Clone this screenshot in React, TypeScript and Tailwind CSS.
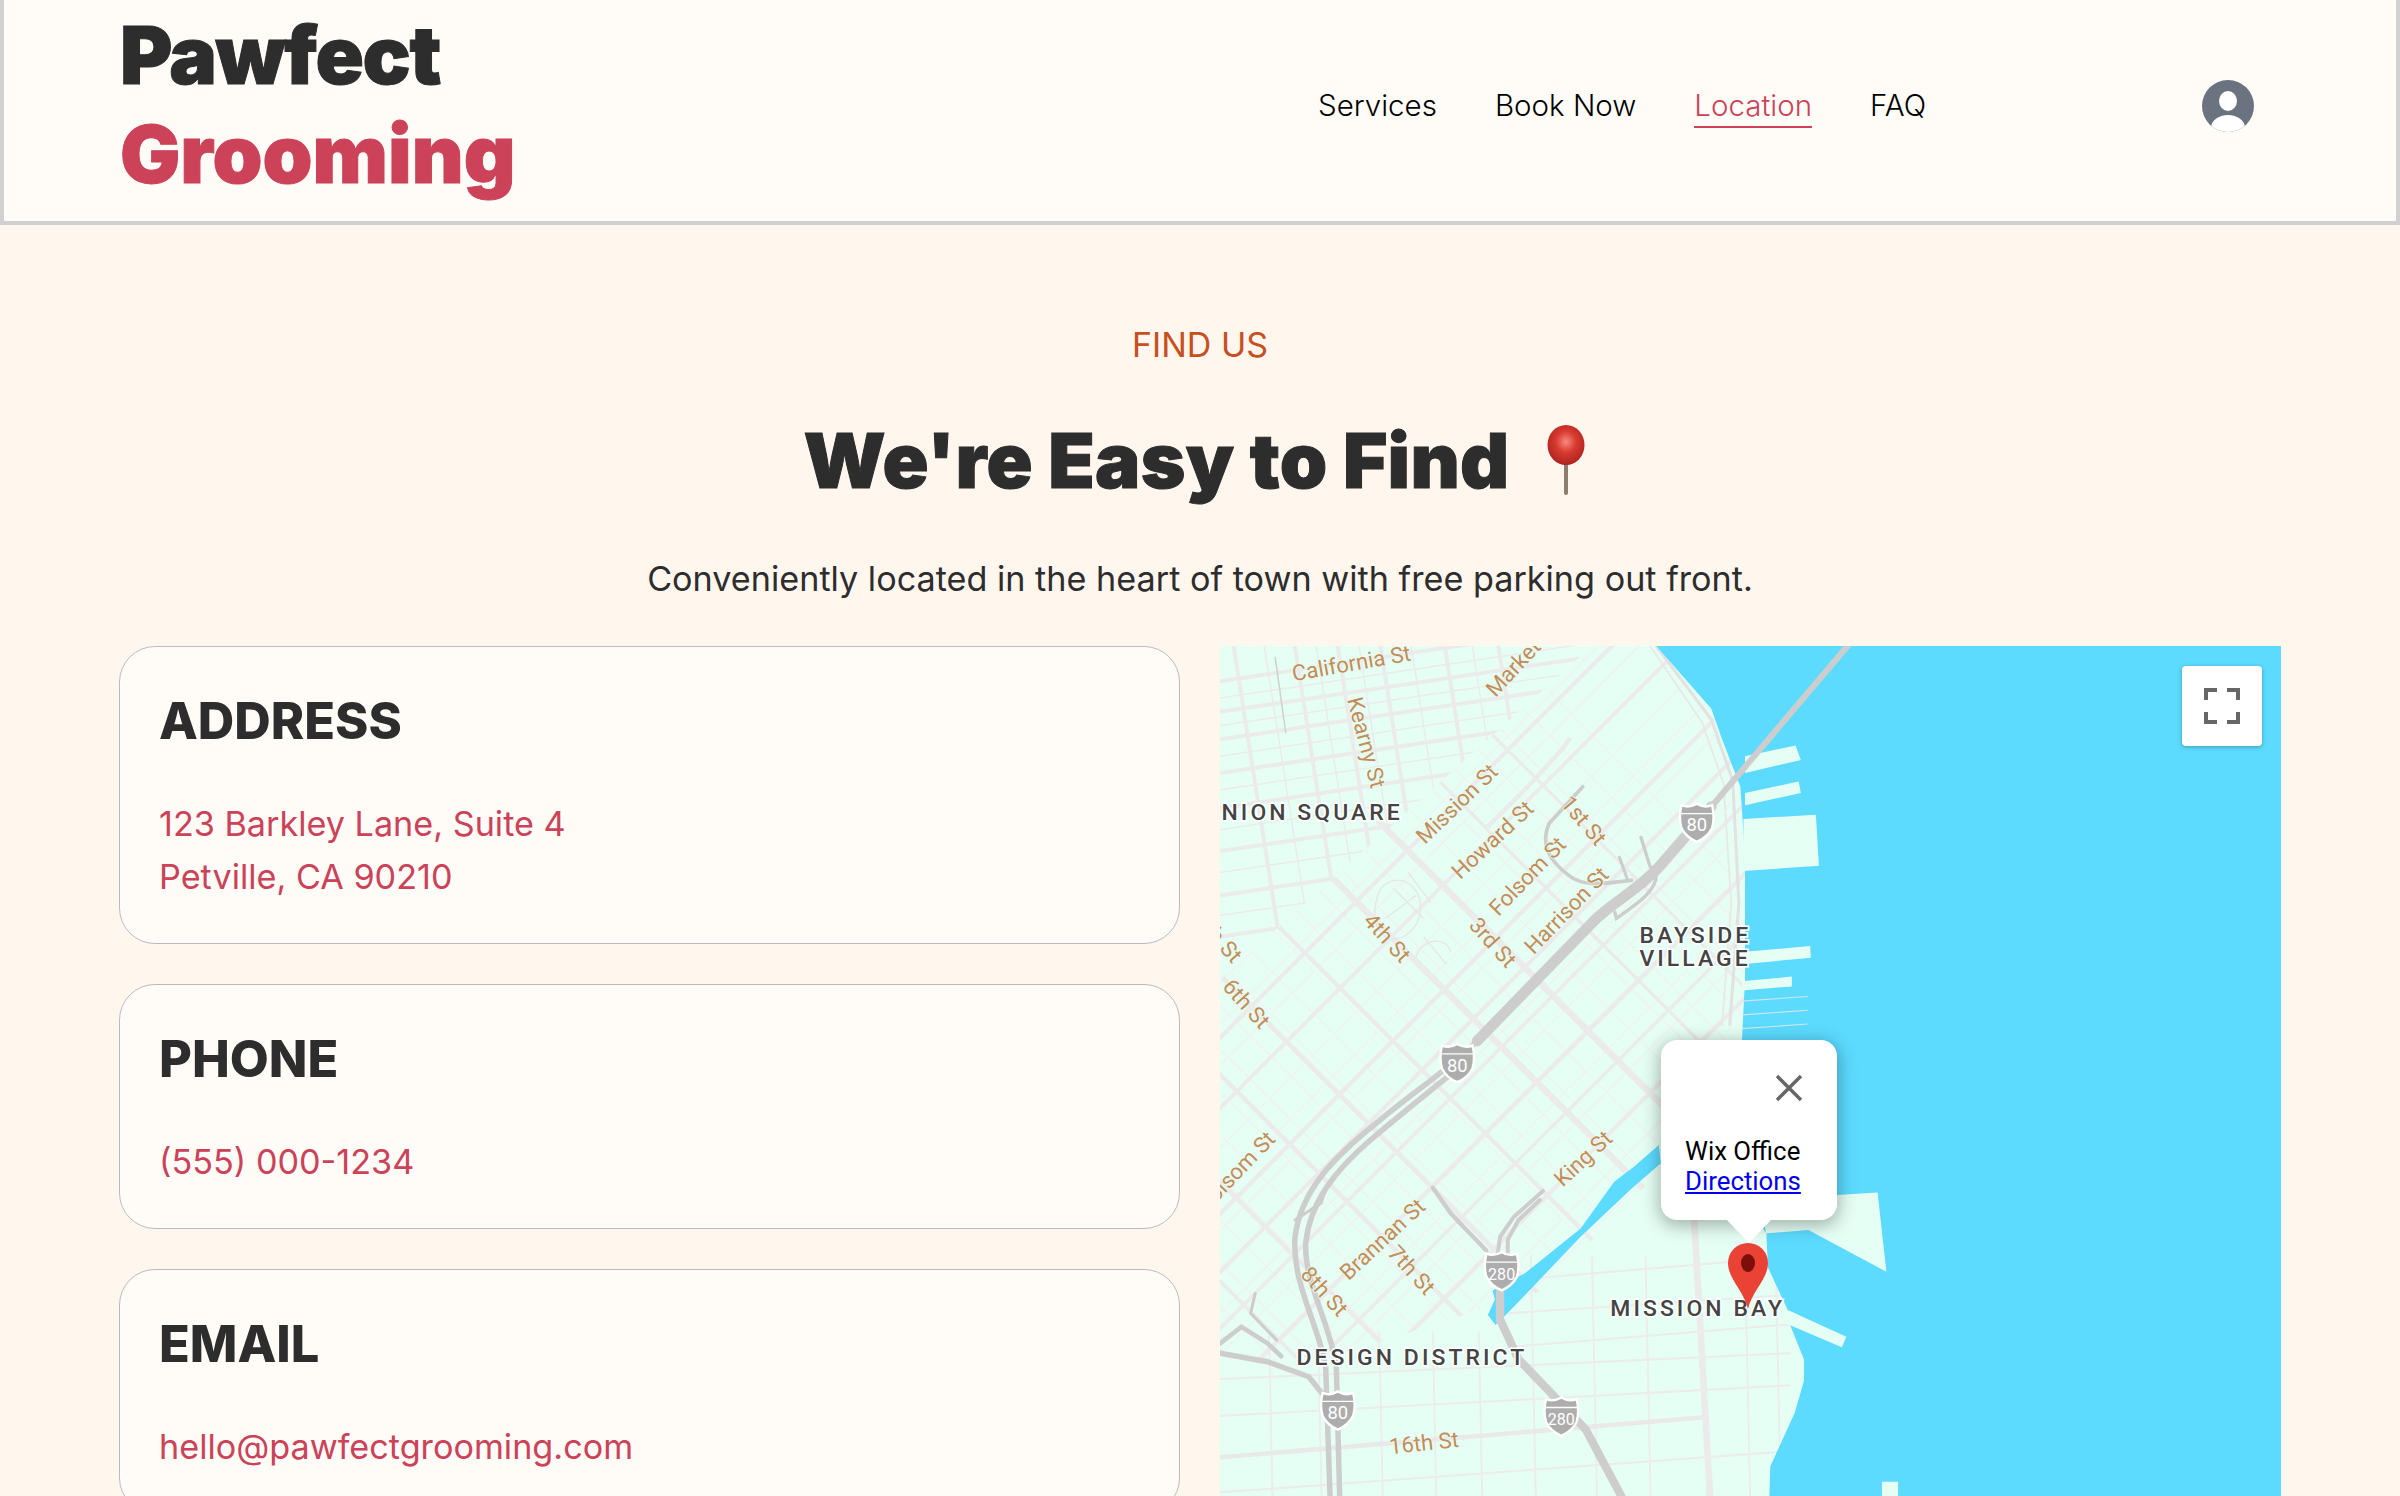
// map geometry is written in the coordinates of the 1568px wide preview
const pt = (c: number, d: number) => `${(c - d) / 2},${(c + d) / 2}`
const diag = (c0: number, d0: number, c1: number, d1: number) => `M${pt(c0, d0)} L${pt(c1, d1)}`

// streets running up-right: x + y = c
const upRightMajor: [number, number][] = [
  [1425, 3.8], [1475, 2.8], [1521, 2.6], [1590, 2.8], [1628, 2.8], [1665, 2.4], [1711, 2.8], [1750, 2.4], [1792, 2.6],
]
const upRightMinor = Array.from({ length: 18 }, (_, i) => 1385 + i * 27)

// streets running down-right: y - x = d
const downRightMajor: [number, number][] = [
  [-495, 2.2], [-430, 2.4], [-297, 4.2], [-230, 2.8], [-160, 3.2], [-95, 3], [-25, 3], [40, 2.6], [105, 2.4], [170, 2.2],
]
const downRightMinor = Array.from({ length: 28 }, (_, i) => -560 + i * 28)

const blockH = [445, 456, 465, 474, 483, 494, 505, 516, 528, 542, 556, 570, 585, 598, 612]
const blockV = [812, 832, 852, 866, 880, 894, 908, 928, 950, 968, 985]
const lowerH = [[797, 901, 1170, 884], [797, 925, 1170, 905], [797, 975, 1170, 948], [990, 836, 1160, 822], [985, 858, 1168, 846], [985, 880, 1172, 865]]
const lowerV = [828, 860, 900, 935, 965, 1000, 1040, 1075, 1140, 1160]

const streetLabels: { t: string; x: number; y: number; r: number; end?: boolean }[] = [
  { t: 'California St', x: 845, y: 445, r: -10 },
  { t: 'Market St', x: 977, y: 456, r: -47 },
  { t: 'Kearny St', x: 880, y: 457, r: 75 },
  { t: 'Mission St', x: 931, y: 552, r: -44 },
  { t: 'Howard St', x: 954, y: 575, r: -43 },
  { t: '1st St', x: 1019, y: 525, r: 50 },
  { t: 'Folsom St', x: 979, y: 599, r: -46 },
  { t: 'Harrison St', x: 1002, y: 624, r: -46 },
  { t: '4th St', x: 890, y: 602, r: 48 },
  { t: '3rd St', x: 959, y: 605, r: 48 },
  { t: '5th St', x: 805, y: 630, r: 48, end: true },
  { t: '6th St', x: 798, y: 645, r: 48 },
  { t: 'Folsom St', x: 834, y: 745, r: -46, end: true },
  { t: 'King St', x: 1021, y: 776, r: -43 },
  { t: 'Brannan St', x: 881, y: 837, r: -43 },
  { t: '7th St', x: 906, y: 819, r: 48 },
  { t: '8th St', x: 849, y: 833, r: 48 },
  { t: '16th St', x: 908, y: 950, r: -6 },
]

const areaLabels = [
  { t: 'NION SQUARE', x: 798, y: 536 },
  { t: 'BAYSIDE', x: 1071, y: 616 },
  { t: 'VILLAGE', x: 1071, y: 631 },
  { t: 'MISSION BAY', x: 1052, y: 860 },
  { t: 'DESIGN DISTRICT', x: 847, y: 892 },
]

function Shield({ x, y, label }: { x: number; y: number; label: string }) {
  return (
    <g transform={`translate(${x} ${y})`}>
      <path
        d="M-10 -11 Q-5 -9 0 -12 Q5 -9 10 -11 Q12 -3 10 4 Q7 10 0 13 Q-7 10 -10 4 Q-12 -3 -10 -11Z"
        fill="#adadad"
        stroke="#fff"
        strokeWidth="1.6"
      />
      <path d="M-10.5 -5.5 H10.5" stroke="#fff" strokeWidth="0.9" />
      <text x="0" y="6" textAnchor="middle" fontFamily="Roboto, sans-serif" fontSize={label.length > 2 ? 10.5 : 12} fill="#fff">
        {label}
      </text>
    </g>
  )
}

function MapArt() {
  return (
    <svg viewBox="797 422 693.2 588" className="block h-[900px] w-[1061px]" preserveAspectRatio="none">
      <defs>
        <clipPath id="downtown">
          <polygon points="797,422 1040,422 797,640" />
        </clipPath>
        <clipPath id="lower">
          <polygon points="797,870 985,870 985,820 1180,800 1180,1010 797,1010" />
        </clipPath>
        <clipPath id="soma">
          <polygon points="797,640 1040,422 1160,422 1160,800 985,850 860,890 797,890" />
        </clipPath>
      </defs>
      <rect x="797" y="422" width="694" height="588" fill="#e6fff4" />

      {/* downtown grid */}
      <g clipPath="url(#downtown)" stroke="#ebebeb" fill="none">
        {blockH.map((y, i) => (
          <path key={y} d={`M797 ${y} L1060 ${y - 39}`} strokeWidth={i % 2 ? 1 : 2.6} />
        ))}
        {blockV.map((x, i) => (
          <path key={x} d={`M${x - 8} 410 L${x + 28} 640`} strokeWidth={i % 2 ? 1 : 2.6} />
        ))}
        <path d="M833 429 L840 479" stroke="#d0d0d0" strokeWidth="1" />
      </g>

      {/* SoMa diagonal grid */}
      <g clipPath="url(#soma)" fill="none">
        {upRightMinor.map(c => (
          <path key={c} d={diag(c, -760, c, 120)} stroke="#eef4f0" strokeWidth="1" />
        ))}
        {downRightMinor.map(d => (
          <path key={d} d={diag(1425, d, 1830, d)} stroke="#eef4f0" strokeWidth="1" />
        ))}
        {upRightMajor.map(([c, w]) => (
          <path key={c} d={diag(c, -760, c, 120)} stroke="#ebebeb" strokeWidth={w} />
        ))}
        {downRightMajor.map(([d, w]) => (
          <path key={d} d={diag(1425, d, 1850, d)} stroke="#ebebeb" strokeWidth={w} />
        ))}
      </g>
      <path d="M900 536 L1062 698 L1107 743 L1107 800 L1119 1010" stroke="#ebebeb" strokeWidth="4.4" fill="none" />
      <path d="M1082 422 L1118 470 L1132 510 L1136 590 L1130 670" stroke="#e2e2e2" strokeWidth="2" fill="none" />
      <path d="M1078 422 L1112 472 L1126 512 L1131 590 L1125 670" stroke="#e8e8e8" strokeWidth="1.2" fill="none" />

      {/* parks and paths */}
      <g fill="none" stroke="#e6e6e6" strokeWidth="0.9">
        <path d="M900 585 C905 570 925 572 928 590 C930 605 915 618 905 612 C897 606 897 595 900 585Z" />
        <path d="M910 580 L930 600 M905 600 L925 585 M920 570 L935 590" />
        <path d="M972 540 L1000 512 L1020 490 L1026 482" strokeWidth="3" stroke="#e9ecea" />
        <path d="M925 625 C930 612 945 612 948 622 M930 612 L945 630" />
      </g>

      {/* bay and mission bay grid */}
      <g clipPath="url(#lower)" fill="none" stroke="#ececec">
        {lowerH.map(([a, b, c, e]) => (
          <path key={`${a}-${b}`} d={`M${a} ${b} L${c} ${e}`} strokeWidth="1.4" />
        ))}
        {lowerV.map(x => (
          <path key={x} d={`M${x} 820 L${x + 4} 1010`} strokeWidth="1.2" />
        ))}
      </g>
      <path d="M797 952 L1112 926" stroke="#e9e9e9" strokeWidth="3" fill="none" />

      {/* water */}
      <path
        d="M1082 422 L1118 463 L1125 483 L1137 514 L1140 560 L1140 640 L1138 680 L1150 800 L1154 806 L1155 828 L1168 856 L1170 867 L1178.5 888 L1178.5 902 L1172.5 923 L1156.5 958 L1155 1010 L1491 1010 L1491 422 Z"
        fill="#5cdbff"
      />
      <path
        d="M1083.7 748 L1067.6 762 L1054.5 772 L1032.6 802.5 L996 832 L975 843 L976.6 849 L972 859 L977 865.6 L989 853.7 L1032.6 808 L1066 776.4 L1085 760 Z"
        fill="#5cdbff"
      />
      <g fill="#e6fff4">
        <polygon points="1140,494 1173,487 1176.5,496.4 1140,505" />
        <polygon points="1140,518 1175,510.6 1176.5,518 1140,526" />
        <polygon points="1139,535 1186.3,532.3 1188.3,565.6 1139,569" />
        <polygon points="1138,622 1182.6,618 1183,625.6 1138,630" />
        <polygon points="1138,641 1170.6,638 1170.6,644.4 1138,647" />
        <polygon points="1150,782 1200.3,780.7 1226.6,779 1232.4,830.8 1181.4,803.6 1153.7,805.8" />
        <polygon points="1168.3,856 1206.2,873.3 1203.3,880.2 1166.8,864.6" />
        <polygon points="1229.5,968 1240,968 1240,1010 1229.5,1010" />
      </g>
      <g stroke="#cfe7ee" strokeWidth="0.7">
        <path d="M1138 654 L1181 651" />
        <path d="M1138 663 L1181 660" />
        <path d="M1138 672 L1181 669" />
      </g>

      {/* freeways */}
      <g fill="none" stroke="#cdcdcd" strokeLinecap="round">
        <path d="M1207 422 L1118 527" strokeWidth="4" />
        <path d="M1118 527 L1085 565 C1070 582 1052 590 1040 603 L965 680" strokeWidth="7" />
        <path d="M965 680 C945 700 925 712 900 733 C870 757 850 778 846 808 C844 838 860 862 866 892 L870 1010" strokeWidth="3.6" />
        <path d="M960 692 C935 712 915 728 895 745 C872 765 856 785 853 812 C852 838 868 862 873 892 L876 1010" strokeWidth="3.6" />
        <path d="M1034 514 L1012 538 C1006 552 1012 562 1025 572 C1035 580 1050 577 1066 575" strokeWidth="2.4" />
        <path d="M1072 547 L1078 566 L1082 572 C1082 582 1070 590 1056 600 L1055 596" strokeWidth="2.2" />
        <path d="M1058 560 L1063 574" strokeWidth="2" />
        <path d="M866 777 L863 786 L846 797" strokeWidth="2" />
        <path d="M797 877.6 L811 866.8 L828 877.6 L837 886" strokeWidth="3" />
        <path d="M797 884 L828 889.6 L855 899.4 L869 917" strokeWidth="3.6" />
        <path d="M820 845 L817 858 L834 875.5" strokeWidth="2" />
        <path d="M936 776 L948 793 L971 817" strokeWidth="2.8" />
        <path d="M1008 778 L989 795 L980 808 L978 822" strokeWidth="2.6" />
        <path d="M1006 784 L992 797 L985 810 L985 822" strokeWidth="2.6" />
        <path d="M980 843 L980 862 L992 888 L1018 915 L1036 934 L1059 977 L1074 1010" strokeWidth="5.4" />
      </g>

      <Shield x={1108.5} y={537} label="80" />
      <Shield x={952} y={694} label="80" />
      <Shield x={874} y={921} label="80" />
      <Shield x={981} y={830} label="280" />
      <Shield x={1020} y={925} label="280" />

      {/* labels */}
      <g fontFamily="Roboto, sans-serif" fontSize="14.4" fill="#c48c57" stroke="#e6fff4" strokeWidth="1" paintOrder="stroke">
        {streetLabels.map(l => (
          <text key={l.t + l.x} x={l.x} y={l.y} transform={`rotate(${l.r} ${l.x} ${l.y})`} textAnchor={l.end ? 'end' : 'start'}>
            {l.t}
          </text>
        ))}
      </g>
      <g fontFamily="Roboto, sans-serif" fontWeight="500" fontSize="15" letterSpacing="2" fill="#444" stroke="#fff" strokeWidth="2" paintOrder="stroke">
        {areaLabels.map(l => (
          <text key={l.t} x={l.x} y={l.y}>
            {l.t}
          </text>
        ))}
      </g>
    </svg>
  )
}

function InfoCard({ title, lines }: { title: string; lines: string[] }) {
  return (
    <div className="rounded-[36px] border border-[#b9bbc4] bg-[#fffcf8] pt-[39px] pr-10 pb-[40px] pl-[39px]">
      <h3 className="text-[50.5px] leading-[70px] font-extrabold text-[#2d2d2d]">{title}</h3>
      <div className="mt-[41px]">
        {lines.map(line => (
          <p key={line} className="text-[34.2px] leading-[53px] text-[#cb4259]">
            {line}
          </p>
        ))}
      </div>
    </div>
  )
}

export default function App() {
  const links = ['Services', 'Book Now', 'Location', 'FAQ']

  return (
    <div className="h-screen overflow-hidden bg-[#fff6ee] font-['Inter',sans-serif]">
      {/* Header */}
      <header className="flex h-[225px] items-start border-x-4 border-b-4 border-[#d1d1d1] bg-[#fffcf8] pl-[116px]">
        <div className="mt-[5px] w-[1198px] text-[80px] leading-[99px] font-black [-webkit-text-stroke:1px_currentColor]">
          <div className="tracking-[-1.4px] text-[#2d2d2d]">Pawfect</div>
          <div className="text-[#cb4259]">Grooming</div>
        </div>
        <nav className="mt-[84px] flex gap-[58px] text-[29.5px] leading-[42px] font-[350]">
          {links.map(link => (
            <a
              key={link}
              className={link === 'Location' ? 'border-b-2 border-[#cb4259] text-[#cb4259]' : 'text-black'}
            >
              {link}
            </a>
          ))}
        </nav>
        <div className="mt-[80px] ml-[276px] size-[52px] overflow-hidden rounded-full bg-[#6b7280]">
          <svg viewBox="0 0 52 52" className="size-[52px]">
            <ellipse cx="26" cy="21" rx="9" ry="10" fill="#fff" />
            <ellipse cx="26" cy="48" rx="17" ry="13" fill="#fff" />
          </svg>
        </div>
      </header>

      {/* Intro */}
      <div className="pt-[95px] text-center">
        <p className="text-[34px] leading-[50px] text-[#c84f1e]">FIND US</p>
        <h2 className="mt-[40px] flex items-center justify-center gap-[38px] pr-[11px] text-[76px] leading-[100px] font-black tracking-[0.3px] text-[#2d2d2d] [-webkit-text-stroke:1px_currentColor]">
          We're Easy to Find
          <svg viewBox="0 0 38 70" className="h-[70px] w-[38px]">
            <defs>
              <radialGradient id="pinHead" cx="0.5" cy="0.42" r="0.6">
                <stop offset="0" stopColor="#f78a80" />
                <stop offset="0.45" stopColor="#d93a30" />
                <stop offset="1" stopColor="#a8231d" />
              </radialGradient>
            </defs>
            <rect x="17" y="34" width="4" height="36" rx="2" fill="#8b7d70" />
            <ellipse cx="19" cy="20" rx="18.5" ry="20" fill="url(#pinHead)" />
          </svg>
        </h2>
        <p className="mt-[44px] text-[34.2px] leading-[50px] text-[#2d2d2d]">
          Conveniently located in the heart of town with free parking out front.
        </p>
      </div>

      {/* Details and map */}
      <div className="mt-[42px] ml-[119px] grid w-[2162px] grid-cols-[1061px_1061px] gap-x-[40px]">
        <div className="flex flex-col gap-[40px]">
          <InfoCard title="ADDRESS" lines={['123 Barkley Lane, Suite 4', 'Petville, CA 90210']} />
          <InfoCard title="PHONE" lines={['(555) 000-1234']} />
          <InfoCard title="EMAIL" lines={['hello@pawfectgrooming.com']} />
        </div>

        <div className="relative h-[900px] overflow-hidden">
          <MapArt />

          {/* Fullscreen button */}
          <button className="absolute top-[20px] right-[19px] flex size-[80px] items-center justify-center rounded-[4px] bg-white shadow-[0_1px_4px_rgba(0,0,0,0.3)]">
            <svg viewBox="0 0 36 36" className="size-[36px]" fill="none" stroke="#666" strokeWidth="4">
              <path d="M2 12V2H13M23 2H34V12M34 24V34H23M13 34H2V24" />
            </svg>
          </button>

          {/* Marker */}
          <svg viewBox="0 0 40 66" className="absolute top-[597px] left-[508px] h-[66px] w-[40px]">
            <path d="M20 66 C16 48 0 36 0 20 A20 20 0 0 1 40 20 C40 36 24 48 20 66Z" fill="#ea4335" />
            <ellipse cx="20" cy="20" rx="7" ry="9" fill="#7c0f0b" />
          </svg>

          {/* Info window */}
          <div className="absolute top-[394px] left-[441px] h-[180px] w-[176px] rounded-[16px] bg-white px-[24px] pt-[96px] font-['Roboto',sans-serif] text-[25.8px] leading-[30px] text-black shadow-[0_4px_18px_2px_rgba(0,0,0,0.3)]">
            <svg viewBox="0 0 28 28" className="absolute top-[34px] left-[114px] size-[28px]" fill="none" stroke="#666" strokeWidth="3.4">
              <path d="M2 2L26 26M26 2L2 26" />
            </svg>
            <div>Wix Office</div>
            <a className="text-[#0000ee] underline">Directions</a>
            <div className="absolute top-[179px] left-[65px] h-[24px] w-[46px] bg-white [clip-path:polygon(0_0,100%_0,50%_100%)]" />
          </div>
        </div>
      </div>
    </div>
  )
}
